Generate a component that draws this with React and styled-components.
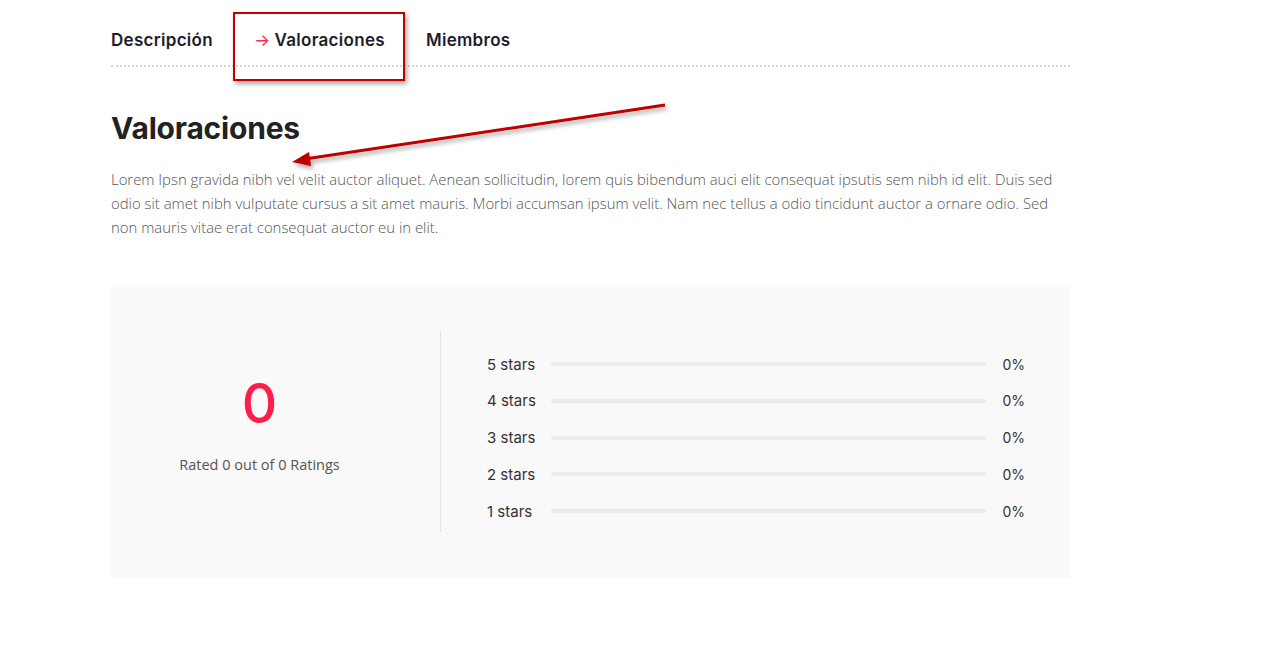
import React from "react";
import styled, { createGlobalStyle } from "styled-components";

const Global = createGlobalStyle`
  html, body { margin: 0; padding: 0; background: #fff; }
  body { font-family: "Open Sans", "Liberation Sans", sans-serif; }
  * { box-sizing: border-box; }
`;

const Page = styled.div`
  position: relative;
  width: 1280px;
  height: 645px;
  overflow: hidden;
`;

const Content = styled.div`
  width: 959px;
  margin-left: 111px;
  padding-top: 29px;
`;

const Tabs = styled.div`
  display: flex;
  gap: 41px;
  border-bottom: 2px dotted #d6d6d6;
  padding-bottom: 14px;
`;

const Tab = styled.div`
  font-family: Inter, "Open Sans", sans-serif;
  font-weight: 600;
  font-size: 17px;
  letter-spacing: 0.3px;
  line-height: 22px;
  color: #1d1d2b;
  display: flex;
  align-items: center;
  gap: 4px;
`;

const TabArrow = styled.span`
  color: #ff2a52;
  font-weight: 400;
`;

const Heading = styled.h2`
  margin: 43px 0 0;
  font-family: Inter, "Open Sans", sans-serif;
  font-weight: 700;
  font-size: 30px;
  line-height: 36px;
  color: #222;
  letter-spacing: -0.2px;
`;

const Para = styled.p`
  margin: 21px 0 0;
  font-family: "Open Sans", sans-serif;
  font-weight: 300;
  font-size: 14.9px;
  line-height: 24px;
  color: #555;
`;

const RatingBox = styled.div`
  margin-top: 48px;
  background: #f9f9f9;
  display: flex;
  padding: 44px 0 46px;
`;

const Summary = styled.div`
  flex: 0 0 330px;
  padding: 0 32px 18px 0;
  border-right: 1px dotted #cfcfcf;
  display: flex;
  flex-direction: column;
  align-items: center;
  justify-content: center;
`;

const Big = styled.div`
  font-family: Inter, "Open Sans", sans-serif;
  font-weight: 500;
  font-size: 55px;
  line-height: 64px;
  color: #ff1d4c;
`;

const Rated = styled.div`
  margin-top: 20px;
  font-family: "Open Sans", sans-serif;
  font-weight: 400;
  font-size: 14.5px;
  color: #555;
`;

const Bars = styled.div`
  flex: 1;
  padding: 22px 45px 10px 46px;
  display: flex;
  flex-direction: column;
  gap: 14.75px;
`;

const Row = styled.div`
  display: flex;
  align-items: center;
  height: 22px;
`;

const Label = styled.div`
  width: 64px;
  font-family: Inter, "Open Sans", sans-serif;
  font-size: 15px;
  color: #333;
`;

const Track = styled.div`
  flex: 1;
  height: 4px;
  background: #ebebeb;
  border-radius: 2px;
`;

const Pct = styled.div`
  width: 39px;
  text-align: right;
  font-family: Inter, "Open Sans", sans-serif;
  font-size: 14px;
  color: #333;
`;

const Highlight = styled.div`
  position: absolute;
  left: 233px;
  top: 12px;
  width: 172px;
  height: 69px;
  border: 2px solid #c00000;
  box-shadow: 2px 3px 5px rgba(0, 0, 0, 0.35);
`;

const Overlay = styled.svg`
  position: absolute;
  left: 0;
  top: 0;
  pointer-events: none;
`;

export default function App() {
  const rows = ["5 stars", "4 stars", "3 stars", "2 stars", "1 stars"];
  return (
    <Page>
      <Global />
      <Content>
        <Tabs>
          <Tab>Descripción</Tab>
          <Tab>
            <TabArrow>→</TabArrow>Valoraciones
          </Tab>
          <Tab>Miembros</Tab>
        </Tabs>
        <Heading>Valoraciones</Heading>
        <Para>
          Lorem Ipsn gravida nibh vel velit auctor aliquet. Aenean sollicitudin, lorem quis bibendum auci elit consequat ipsutis sem nibh id elit. Duis sed odio sit amet nibh vulputate cursus a sit amet mauris. Morbi accumsan ipsum velit. Nam nec tellus a odio tincidunt auctor a ornare odio. Sed non mauris vitae erat consequat auctor eu in elit.
        </Para>
        <RatingBox>
          <Summary>
            <Big>0</Big>
            <Rated>Rated 0 out of 0 Ratings</Rated>
          </Summary>
          <Bars>
            {rows.map((r) => (
              <Row key={r}>
                <Label>{r}</Label>
                <Track />
                <Pct>0%</Pct>
              </Row>
            ))}
          </Bars>
        </RatingBox>
      </Content>
      <Highlight />
      <Overlay width="1280" height="645">
        <defs>
          <filter id="sh" x="-10%" y="-50%" width="120%" height="200%">
            <feDropShadow dx="2" dy="3" stdDeviation="2" floodColor="#000" floodOpacity="0.35" />
          </filter>
        </defs>
        <g filter="url(#sh)">
          <line x1="665" y1="105" x2="305" y2="159" stroke="#c00000" strokeWidth="3" />
          <polygon points="292,162 309,152 311,166" fill="#c00000" />
        </g>
      </Overlay>
    </Page>
  );
}
